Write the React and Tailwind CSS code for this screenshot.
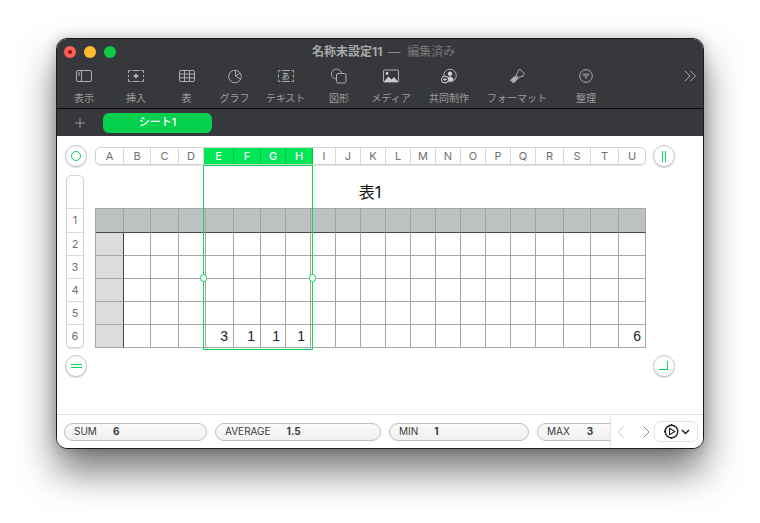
const JP = '"Inter","Noto Sans CJK JP",sans-serif';
const colW = [28,27,28,27,28,27,25,25,25,25,25,25,25,25,25,25,25,28,27,28,27];
const letters = 'ABCDEFGHIJKLMNOPQRSTU'.split('');
const barW = [28,27,28,25,30,27,25,27,23,25,25,25,25,25,25,25,25,28,27,28,26];

function Ic({ children, w = 18, h = 16 }) {
  return (
    <svg width={w} height={h} viewBox={`0 0 ${w} ${h}`} fill="none" stroke="#adadaf" strokeWidth="1">
      {children}
    </svg>
  );
}
const tools = [
  ['表示', 52, <Ic key="a"><rect x="1.500" y="2.500" width="15" height="11" rx="1.500" /><path d="M6.500 2.500V13.500M3 5h2M3 7h2" /></Ic>],
  ['挿入', 52, <Ic key="b"><path d="M1.500 5V2.500h2.500M14 2.500h2.500V5M16.500 7v2M1.500 7v2M16.500 11v2.500H14M4 13.500H1.500V11M5.500 2.500h7M5.500 13.500h7" /><path d="M9 5.500v5M6.500 8h5" strokeWidth="1.300" stroke="#c8c8ca" /></Ic>],
  ['表', 49, <Ic key="c"><rect x="1.500" y="2.500" width="15" height="11" rx="1.500" /><path d="M1.500 6h15M1.500 9.800h15M6.500 2.500V13.500M11.500 2.500V13.500" /></Ic>],
  ['グラフ', 47, <Ic key="d"><circle cx="9" cy="8.500" r="6.300" /><path d="M9.500 2.500V8l4.800 3M9.500 8l4.800-2.800" /></Ic>],
  ['テキスト', 55, <Ic key="e"><path d="M1.500 4.500v-2h2M14.500 2.500h2v2M16.500 6.500v3M1.500 6.500v3M16.500 11.500v2h-2M3.500 13.500h-2v-2M5 2.500h8M5 13.500h8" /></Ic>],
  ['図形', 52, <Ic key="f"><circle cx="6.500" cy="6" r="5" /><rect x="6.500" y="5.500" width="9.500" height="9.500" rx="1.500" fill="#37383b" /></Ic>],
  ['メディア', 52, <Ic key="g"><rect x="1.500" y="2" width="15" height="12" rx="1" /><circle cx="5" cy="5.500" r="1.400" fill="#c8c8ca" stroke="none" /><path d="M1.500 14l5-5.500 3 3L12 9l4.500 5z" fill="#c8c8ca" stroke="none" /></Ic>],
  ['共同制作', 64, <Ic key="h"><circle cx="10" cy="7.500" r="6.300" /><circle cx="10" cy="5.700" r="2.200" fill="#d0d0d2" stroke="none" /><path d="M6.300 12c.5-2.300 2-3.500 3.700-3.500s3.200 1.200 3.700 3.500c-2 1.600-5.400 1.600-7.400 0z" fill="#d0d0d2" stroke="none" /><circle cx="5" cy="11.500" r="3.500" fill="#37383b" stroke="#d0d0d2" /><path d="M5 9.700v3.600M3.200 11.500h3.600" stroke="#d0d0d2" /></Ic>],
  ['フォーマット', 72, <Ic key="i"><path d="M11.500 1l5 4.500-2.500 3.500-1.500-.8-1.700 1.700-2.300-2.300.3-2.300 1.700-1.500-.4-1.300z" /><path d="M7.500 8l2.500 2.500L5.500 15l-3-3z" fill="#adadaf" /></Ic>],
  ['整理', 66, <Ic key="j"><circle cx="9" cy="8" r="6.300" /><path d="M5.500 6.200h7M6.500 8h5M8 9.800h2" /></Ic>],
];

const cells = [];
for (let r = 0; r < 6; r++) {
  colW.forEach((_, c) => {
    const head = r === 0;
    const stub = c === 0 && !head;
    let val = '';
    if (r === 5) val = { 4: '3', 5: '1', 6: '1', 7: '1', 20: '6' }[c] || '';
    cells.push(
      <div
        key={r + '-' + c}
        className={`flex items-center justify-end border-r border-b text-[14px] leading-[20px] text-[#222] [font-family:'Liberation_Sans',sans-serif] ${c === 20 ? 'pr-[4px]' : 'pr-[5px]'} ${head ? 'bg-[#bec1c1] border-r-[#a2a4a4] border-b-[#4a4a4a]' : stub ? 'bg-[#dcdcdc] border-r-[#444] border-b-[#a6a6a6]' : 'bg-white border-r-[#a6a6a6] border-b-[#a6a6a6]'}`}
      >
        {val}
      </div>
    );
  });
}

function Round({ children }) {
  return (
    <div className="flex h-[22px] w-[22px] items-center justify-center rounded-full border border-[#c6c6c6] bg-white shadow-[0_1px_1px_rgba(0,0,0,0.15)]">
      {children}
    </div>
  );
}

function Pill({ w, label, value, gap }) {
  return (
    <div className="flex h-[18px] shrink-0 items-center rounded-full border border-[#bdbdbd] bg-gradient-to-b from-[#fafafa] to-[#f0f0f0] pl-[9px] text-[10px] text-[#3a3a3a]" style={{ width: w }}>
      <span>{label}</span>
      <span className="font-bold" style={{ marginLeft: gap }}>{value}</span>
    </div>
  );
}

export default function App() {
  return (
    <div className="h-[523px] w-[760px] overflow-hidden bg-white pl-[56px] pt-[38px]" style={{ fontFamily: JP }}>
      <div className="flex h-[411px] w-[648px] flex-col overflow-hidden rounded-[11px] border border-[#1c1c1c] bg-white shadow-[0_22px_38px_rgba(0,0,0,0.55),0_0_12px_rgba(0,0,0,0.2)]">
        {/* title + toolbar */}
        <div className="h-[70px] shrink-0 border-b border-[#0f0f10] bg-[#37383b]">
          <div className="relative flex h-[26px] items-center pl-[7px]">
            <div className="flex gap-[8px]">
              <div className="flex h-[12px] w-[12px] items-center justify-center rounded-full bg-[#ff5f57]"><div className="h-[4px] w-[4px] rounded-full bg-[#8f0f0a]" /></div>
              <div className="h-[12px] w-[12px] rounded-full bg-[#febc2e]" />
              <div className="h-[12px] w-[12px] rounded-full bg-[#10c93f]" />
            </div>
            <div className="ml-[196px] flex items-center text-[12px] leading-[16px]">
              <span className="font-bold text-[#a9a9ab]">名称未設定11</span>
              <span className="ml-[6px] mr-[7px] text-[#8a8a8c]">—</span>
              <span className="text-[#77777a]">編集済み</span>
            </div>
          </div>
          <div className="flex pl-[1px] pt-[2px]">
            {tools.map(([label, w, icon]) => (
              <div key={label} className="relative flex flex-col items-center" style={{ width: w }}>
                <div className="flex h-[18px] items-center">{icon}</div>
                {label === 'テキスト' && <span className="absolute left-1/2 top-[3px] -translate-x-1/2 text-[8px] leading-[12px] text-[#c4c4c6]">あ</span>}
                <span className="mt-[6px] whitespace-nowrap text-[10px] leading-[14px] text-[#9c9c9e]">{label}</span>
              </div>
            ))}
            <div className="ml-[65px] flex h-[18px] items-center">
              <svg width="13" height="12" viewBox="0 0 13 12" fill="none" stroke="#a8a8aa" strokeWidth="1"><path d="M1 1l5 5-5 5M6.500 1l5 5-5 5" /></svg>
            </div>
          </div>
        </div>
        {/* sheet tabs */}
        <div className="flex h-[27px] shrink-0 items-center bg-[#37383b] pl-[17px]">
          <svg width="12" height="12" viewBox="0 0 12 12" stroke="#9a9a9c" strokeWidth="1"><path d="M6 1v10M1 6h10" /></svg>
          <div className="ml-[17px] flex h-[20px] w-[109px] items-center justify-center rounded-[6px] bg-[#05d14f] text-[11px] font-medium text-white">シート1</div>
        </div>
        {/* canvas */}
        <div className="relative flex flex-1 flex-col bg-white">
          <div className="flex items-center pl-[8px] pt-[9px]">
            <Round><div className="h-[10px] w-[10px] rounded-full border border-[#0ad458]" /></Round>
            <div className="ml-[8px] flex h-[18px] w-[551px] overflow-hidden rounded-[5px] border border-[#d2d2d2] shadow-[0_1px_1px_rgba(0,0,0,0.12)]">
              {letters.map((l, i) => {
                const sel = i >= 4 && i <= 7;
                return (
                  <div key={l} style={{ width: barW[i] }} className={`flex shrink-0 items-center justify-center border-r text-[11px] last:border-r-0 ${sel ? 'border-r-[#03c04a] bg-[#00e756] font-medium text-white' : 'border-r-[#d8d8d8] text-[#707070]'}`}>
                    {l}
                  </div>
                );
              })}
            </div>
            <div className="ml-[7px]">
              <Round><div className="h-[11px] w-[4px] border-x border-[#0ad458]" /></Round>
            </div>
          </div>
          <div className="mt-[8px] flex pl-[9px]">
            <div className="flex w-[18px] flex-col overflow-hidden rounded-[5px] border border-[#d2d2d2] shadow-[0_1px_1px_rgba(0,0,0,0.12)]">
              {[33, 24, 23, 23, 23, 23, 22].map((h, i) => (
                <div key={i} style={{ height: h }} className="flex items-center justify-center border-b border-[#dadada] text-[11px] text-[#707070] last:border-b-0">
                  {i > 0 ? i : ''}
                </div>
              ))}
            </div>
            <div className="ml-[11px] flex flex-col">
              <div className="flex h-[33px] items-center justify-center pr-[1px] pt-[1px] text-[16px] text-[#111]">表1</div>
              <div
                className="grid border-l border-t border-[#a6a6a6]"
                style={{ gridTemplateColumns: colW.map((w) => w + 'px').join(' '), gridTemplateRows: '24px 23px 23px 23px 23px 23px', width: 551 }}
              >
                {cells}
              </div>
            </div>
          </div>
          <div className="mt-[7px] flex justify-between pl-[8px] pr-[28px]">
            <Round><div className="h-[4px] w-[11px] border-y border-[#0ad458]" /></Round>
            <Round><div className="mb-[2px] ml-[-1px] h-[9px] w-[9px] border-b border-r border-[#0ad458]" /></Round>
          </div>
          {/* selection overlay */}
          <div className="pointer-events-none absolute left-[146px] top-[29px] h-[185px] w-[110px] border border-[#12d65a]">
            <div className="absolute left-[-4px] top-[108px] h-[8px] w-[7px] rounded-full border border-[#12d65a] bg-white" />
            <div className="absolute right-[-4px] top-[108px] h-[8px] w-[7px] rounded-full border border-[#12d65a] bg-white" />
          </div>
        </div>
        {/* status bar */}
        <div className="flex h-[34px] shrink-0 border-t border-[#e4e4e4] bg-white">
          <div className="flex w-[553px] items-center gap-[8px] overflow-hidden pl-[7px]">
            <Pill w={143} label="SUM" value="6" gap={16} />
            <Pill w={166} label="AVERAGE" value="1.5" gap={16} />
            <Pill w={140} label="MIN" value="1" gap={16} />
            <Pill w={100} label="MAX" value="3" gap={17} />
          </div>
          <div className="flex flex-1 items-center border-l border-[#e4e4e4] pl-[5px]">
            <svg width="10" height="14" viewBox="0 0 10 14" fill="none" stroke="#c4c4c4" strokeWidth="1"><path d="M7.500 1.500L2 7l5.500 5.500" /></svg>
            <svg className="ml-[15px]" width="10" height="14" viewBox="0 0 10 14" fill="none" stroke="#8a8a8a" strokeWidth="1"><path d="M2.500 1.500L8 7l-5.500 5.500" /></svg>
            <div className="ml-[3px] flex h-[21px] w-[44px] items-center justify-center gap-[1px] rounded-[6px] border border-[#e2e2e2]">
              <svg width="17" height="17" viewBox="0 0 17 17" fill="none" stroke="#222" strokeWidth="1.500">
                <circle cx="8.500" cy="8.500" r="6.300" />
                <path d="M6.500 5.300l5.300 3.200-5.300 3.200z" strokeWidth="1.100" />
                <path d="M1 8.500h1.500M8.500 1v1M8.500 15v1" />
              </svg>
              <svg width="9" height="6" viewBox="0 0 9 6" fill="none" stroke="#222" strokeWidth="1.500"><path d="M1 1l3.500 3.500L8 1" /></svg>
            </div>
          </div>
        </div>
      </div>
    </div>
  );
}
